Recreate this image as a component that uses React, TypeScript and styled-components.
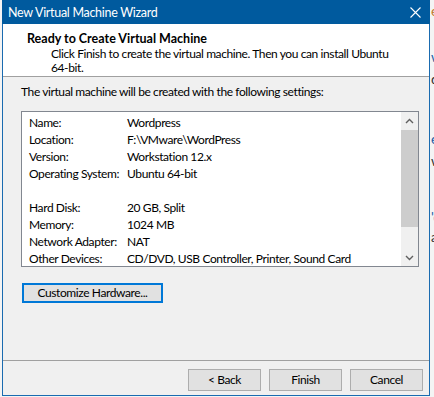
import React from 'react';
import styled, { createGlobalStyle } from 'styled-components';

const GlobalStyle = createGlobalStyle`
  html, body {
    margin: 0;
    padding: 0;
    background: #f4f4f4;
    overflow: hidden;
  }
  body {
    font-family: Lato, "Noto Sans", sans-serif;
    font-size: 12px;
    letter-spacing: -0.4px;
    color: #000;
  }
`;

const Page = styled.div`
  display: flex;
  width: 434px;
  height: 397px;
  padding-left: 2px;
  box-sizing: border-box;
`;

const Window = styled.div`
  display: flex;
  flex-direction: column;
  width: 428px;
  height: 396px;
  border: 1px solid #1a6bb0;
  border-top: none;
  box-sizing: border-box;
  background: #f0f0f0;
`;

const TitleBar = styled.div`
  display: flex;
  align-items: center;
  justify-content: space-between;
  height: 24px;
  margin: 0 -1px;
  padding: 0 0 0 6px;
  background: #005a9e;
  color: #fff;
  font-size: 12.5px;
  letter-spacing: -0.3px;
`;

const CloseButton = styled.div`
  display: flex;
  align-items: center;
  justify-content: center;
  width: 30px;
  height: 24px;
`;

const Header = styled.div`
  height: 45px;
  background: #fff;
  border-bottom: 1px solid #a0a0a0;
  padding: 7px 0 0 24px;
  box-sizing: content-box;
`;

const HeaderTitle = styled.div`
  font-weight: bold;
  font-size: 12.5px;
  line-height: 16px;
  letter-spacing: 0;
`;

const HeaderText = styled.div`
  padding-left: 24px;
  line-height: 14px;
  width: 340px;
`;

const Body = styled.div`
  flex: 1;
  display: flex;
  flex-direction: column;
  padding: 7px 0 0 18px;
`;

const Intro = styled.div`
  line-height: 16px;
`;

const ListBox = styled.div`
  display: flex;
  margin-top: 11px;
  width: 398px;
  height: 156px;
  border: 1px solid #828790;
  box-sizing: border-box;
  background: #fff;
`;

const Rows = styled.div`
  flex: 1;
  padding: 2px 0 0 7px;
`;

const Row = styled.div`
  display: flex;
  height: 17px;
  line-height: 17px;
  white-space: nowrap;
`;

const Label = styled.span`
  width: 98px;
  flex-shrink: 0;
`;

const ScrollBar = styled.div`
  display: flex;
  flex-direction: column;
  width: 17px;
  background: #f0f0f0;
`;

const ScrollArrow = styled.div`
  display: flex;
  align-items: center;
  justify-content: center;
  height: 17px;
`;

const Thumb = styled.div`
  height: 97px;
  margin: 1px 0;
  background: #cdcdcd;
`;

const ScrollTrack = styled.div`
  flex: 1;
`;

const Button = styled.button<{ $focused?: boolean }>`
  font-family: inherit;
  font-size: 12px;
  letter-spacing: inherit;
  color: #000;
  background: #e1e1e1;
  border: ${p => (p.$focused ? '2px solid #0078d7' : '1px solid #adadad')};
  padding: 0;
  height: ${p => (p.$focused ? '20px' : '22px')};
  box-sizing: border-box;
  line-height: 16px;
`;

const CustomizeButton = styled(Button)`
  width: 141px;
  margin-top: 16px;
  align-self: flex-start;
  margin-left: 1px;
`;

const Footer = styled.div`
  display: flex;
  justify-content: flex-end;
  gap: 8px;
  border-top: 1px solid #a0a0a0;
  padding: 8px 6px 0 0;
  height: 35px;
  box-sizing: border-box;
`;

const FooterButton = styled(Button)`
  width: 73px;
`;

const Backdrop = styled.div`
  flex: 1;
  overflow: hidden;
  position: relative;
  font-size: 14px;
  white-space: nowrap;
`;

const BackdropLine = styled.div<{ $top: number; $color?: string }>`
  position: absolute;
  left: 1px;
  top: ${p => p.$top}px;
  color: ${p => p.$color || '#1a5fa8'};
`;

const Chevron = ({ up }: { up?: boolean }) => (
  <svg width="9" height="6" viewBox="0 0 9 6">
    <path
      d={up ? 'M1 5 L4.5 1.5 L8 5' : 'M1 1 L4.5 4.5 L8 1'}
      fill="none"
      stroke="#606060"
      strokeWidth="1.4"
    />
  </svg>
);

const settings: [string, string][] = [
  ['Name:', 'Wordpress'],
  ['Location:', 'F:\\VMware\\WordPress'],
  ['Version:', 'Workstation 12.x'],
  ['Operating System:', 'Ubuntu 64-bit'],
  ['', ''],
  ['Hard Disk:', '20 GB, Split'],
  ['Memory:', '1024 MB'],
  ['Network Adapter:', 'NAT'],
  ['Other Devices:', 'CD/DVD, USB Controller, Printer, Sound Card'],
];

export default function App() {
  return (
    <>
      <GlobalStyle />
      <Page>
        <Window>
          <TitleBar>
            <span>New Virtual Machine Wizard</span>
            <CloseButton>
              <svg width="11" height="11" viewBox="0 0 11 11">
                <path d="M0.5 0.5 L10.5 10.5 M10.5 0.5 L0.5 10.5" stroke="#fff" strokeWidth="1.1" />
              </svg>
            </CloseButton>
          </TitleBar>
          <Header>
            <HeaderTitle>Ready to Create Virtual Machine</HeaderTitle>
            <HeaderText>
              Click Finish to create the virtual machine. Then you can install Ubuntu 64-bit.
            </HeaderText>
          </Header>
          <Body>
            <Intro>The virtual machine will be created with the following settings:</Intro>
            <ListBox>
              <Rows>
                {settings.map(([label, value], i) => (
                  <Row key={i}>
                    <Label>{label}</Label>
                    <span>{value}</span>
                  </Row>
                ))}
              </Rows>
              <ScrollBar>
                <ScrollArrow>
                  <Chevron up />
                </ScrollArrow>
                <Thumb />
                <ScrollTrack />
                <ScrollArrow>
                  <Chevron />
                </ScrollArrow>
              </ScrollBar>
            </ListBox>
            <CustomizeButton $focused>Customize Hardware...</CustomizeButton>
          </Body>
          <Footer>
            <FooterButton>&lt; Back</FooterButton>
            <FooterButton>Finish</FooterButton>
            <FooterButton>Cancel</FooterButton>
          </Footer>
        </Window>
        <Backdrop>
          <BackdropLine $top={2} $color="#c07a30">e</BackdropLine>
          <BackdropLine $top={48}>w</BackdropLine>
          <BackdropLine $top={70} $color="#333">d</BackdropLine>
          <BackdropLine $top={130}>e</BackdropLine>
          <BackdropLine $top={152} $color="#333">w</BackdropLine>
          <BackdropLine $top={208}>'c</BackdropLine>
          <BackdropLine $top={228} $color="#333">a</BackdropLine>
        </Backdrop>
      </Page>
    </>
  );
}
